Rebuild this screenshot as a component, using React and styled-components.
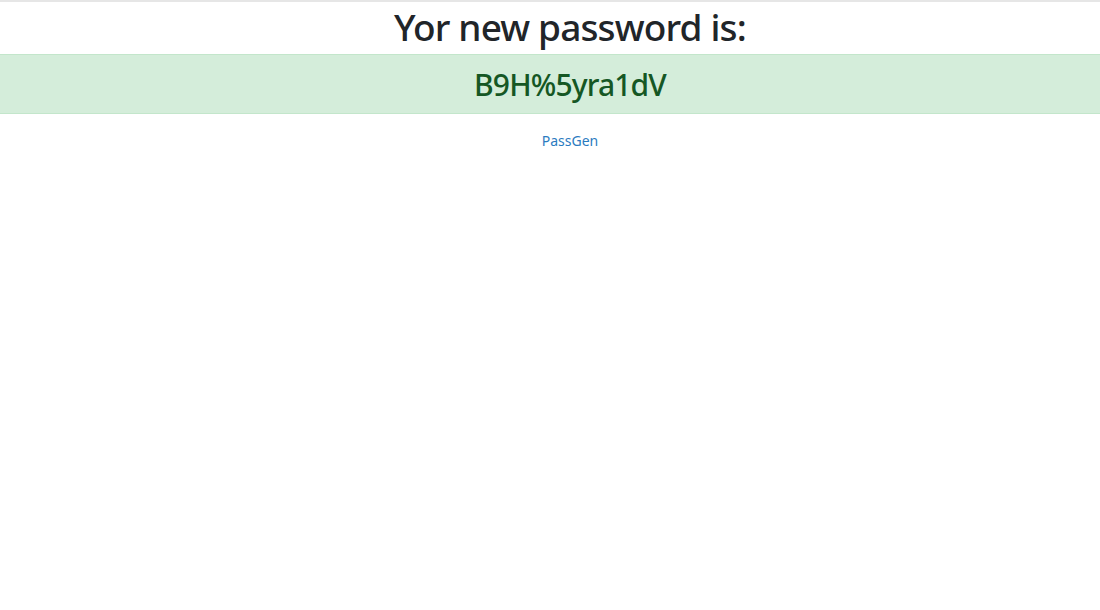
import React from "react";
import styled, { createGlobalStyle } from "styled-components";

const Global = createGlobalStyle`
  html, body { margin: 0; padding: 0; background: #fff; }
  body { font-family: "Noto Sans", "Open Sans", sans-serif; color: #212529; }
`;

const Page = styled.div`
  border-top: 2px solid #e6e6e6;
  min-height: 608px;
  display: flex;
  flex-direction: column;
`;

const Centered = styled.div`
  display: flex;
  justify-content: center;
  padding-left: 40px;
`;

const Heading = styled.h1`
  margin: 0;
  height: 52px;
  font-size: 37px;
  font-weight: 500;
  line-height: 50px;
  color: #212529;
  letter-spacing: -0.85px;
`;

const Alert = styled.div`
  background: #d4edda;
  border-top: 1px solid #c3e6cb;
  border-bottom: 1px solid #c3e6cb;
  height: 58px;
  display: flex;
  align-items: center;
  justify-content: center;
  padding-left: 40px;
`;

const Password = styled.h2`
  margin: 0;
  font-size: 30px;
  font-weight: 500;
  color: #155724;
  letter-spacing: -0.85px;
`;

const Footer = styled.div`
  display: flex;
  justify-content: center;
  padding-left: 40px;
  padding-top: 17px;
`;

const Link = styled.a`
  font-size: 14px;
  color: #2b7bbf;
  text-decoration: none;
`;

export default function App() {
  return (
    <>
      <Global />
      <Page>
        <Centered>
          <Heading>Yor new password is:</Heading>
        </Centered>
        <Alert>
          <Password>B9H%5yra1dV</Password>
        </Alert>
        <Footer>
          <Link href="#">PassGen</Link>
        </Footer>
      </Page>
    </>
  );
}
